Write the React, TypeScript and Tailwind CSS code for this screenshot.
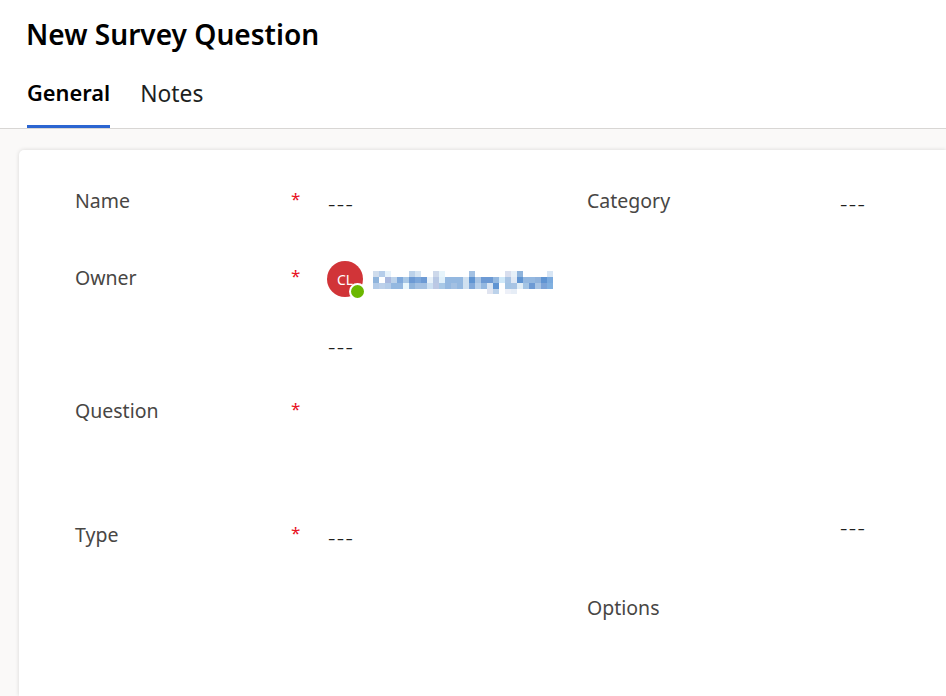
const font = "font-['Noto_Sans','Open_Sans',sans-serif]";

const W = "#fff";
// the blurred owner name in the reference, one array per row of 6px blocks
const mosaic: string[][] = [
  ["#cfdcec", "#b5cdea", "#e6f2fb", W, W, W, "#bcd2ea", "#d6e4f2", W, W, "#cdd8ea", "#e6f4fb", W, W, W, W, "#a3c1e3", W, W, W, W, W, "#d8deee", "#e6f0f8", "#8fb4dc", W, W, W, W, "#d8e6f5"],
  ["#8fb4dc", W, "#a9b8de", "#bcd2ea", "#80aadc", "#a9c8e6", "#6d9ad4", "#7ba6da", "#6d9ad4", "#e8f1f9", "#b8c8e4", "#e0f0fa", "#94b8e0", "#94b8e0", "#94b8e0", "#cfe0f0", "#5f94d2", "#a8c4e4", "#6d9ad4", "#6d9ad4", "#94b8e0", "#cfe8f8", "#a8c4e4", "#dfe8f4", "#5f94d2", "#94b8e0", "#94b8e0", "#8fb2dc", "#5f94d2", "#7aaade"],
  ["#b3cbe8", "#bcd0ea", "#b3cbe8", "#94b8e0", "#94b8e0", "#e8f6fc", "#8fb4dc", "#a3c0e2", "#a3c0e2", "#cde0f2", "#bcc8e4", "#a8c8e6", "#94b8e0", "#a3c0e2", "#94b8e0", "#cfe0f0", "#80a8da", "#b8d0ea", "#94b8e0", "#d8e4f2", "#5f94d2", W, "#a3c4e4", "#a8c4e4", "#e0edf6", "#a3c4e4", "#6d9ad4", "#a8c4e4", "#7ba3d8", "#80b0e0"],
  [W, W, W, W, W, W, W, W, W, W, W, W, W, W, W, W, W, W, W, "#e0e4f0", "#bcd2ea", W, "#edf0f8", "#e6edf6", W, W, W, W, W, W],
];

function Label({ text }: { text: string }) {
  return <div className="text-[19.5px] leading-[26px] text-[#484644]">{text}</div>;
}

function Star() {
  return <div className="w-[36px] text-[17px] leading-[22px] text-[#e81123]">*</div>;
}

function Dashes() {
  return <div className="-mt-[1px] mb-[1px] pl-[1px] text-[23px] leading-[26px] font-[350] tracking-[1.3px] text-[#201f1e]">---</div>;
}

function FieldRow({ label, value, className }: { label: string; value?: boolean; className?: string }) {
  return (
    <div className={`flex ${className ?? ""}`}>
      <div className="w-[216px]">
        <Label text={label} />
      </div>
      <Star />
      {value && (
        <div className="pt-[3px]">
          <Dashes />
        </div>
      )}
    </div>
  );
}

export default function App() {
  return (
    <div className={`w-[946px] h-[696px] overflow-hidden flex flex-col bg-[#faf9f8] ${font}`}>
      <div className="h-[129px] shrink-0 bg-white border-b border-[#d8d6d4] pl-[26px]">
        <h1 className="pt-[14px] text-[28.1px] leading-[40px] font-semibold text-black">New Survey Question</h1>
        <div className="flex gap-[30px] mt-[18px] pl-[1px]">
          <div className="h-[56px] border-b-[3px] border-[#2b65d1] text-[21.8px] leading-[42px] font-semibold text-black">General</div>
          <div className="text-[22.8px] leading-[44px] text-[#201f1e]">Notes</div>
        </div>
      </div>

      <div className="flex-1 pl-[19px] pt-[21px]">
        <div className="h-full bg-white rounded-tl-[5px] shadow-[0_0_4px_rgba(0,0,0,0.14)] pl-[56px] pt-[38px] flex">
          <div className="w-[512px] shrink-0">
            <FieldRow label="Name" value />
            <div className="flex mt-[48px]">
              <div className="w-[216px]">
                <Label text="Owner" />
              </div>
              <Star />
              <div className="flex items-center gap-[10px] -mt-[4px]">
                <div className="relative w-[36px] h-[36px] rounded-full bg-[#d13438] text-white text-[14px] flex items-center justify-center">
                  CL
                  <span className="absolute -right-[3px] -bottom-[3px] w-[17px] h-[17px] rounded-full bg-[#6bb700] border-[2px] border-white" />
                </div>
                <svg className="mt-[7px]" width="180" height="23" viewBox="0 0 180 23" shapeRendering="crispEdges">
                  {mosaic.map((row, y) =>
                    row.map((c, x) => <rect key={`${x}-${y}`} x={x * 6} y={y * 6} width="6" height={y === 3 ? 5 : 6} fill={c} />)
                  )}
                </svg>
              </div>
            </div>
            <div className="pl-[252px] mt-[37px]">
              <Dashes />
            </div>
            <FieldRow label="Question" className="mt-[39px]" />
            <FieldRow label="Type" value className="mt-[98px]" />
          </div>
          <div className="flex-1">
            <div className="flex">
              <div className="w-[252px]">
                <Label text="Category" />
              </div>
              <div className="pt-[3px]">
                <Dashes />
              </div>
            </div>
            <div className="pl-[252px] mt-[298px]">
              <Dashes />
            </div>
            <div className="mt-[55px]">
              <Label text="Options" />
            </div>
          </div>
        </div>
      </div>
    </div>
  );
}
